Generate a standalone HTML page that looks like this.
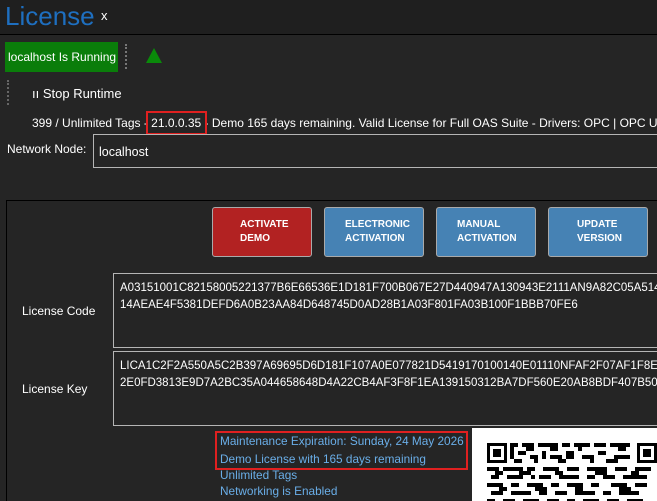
<!DOCTYPE html>
<html style="overflow:hidden"><head><style>
body{margin:0;width:657px;height:501px;background:#252525;overflow:hidden;font-family:"Liberation Sans",sans-serif;color:#fff;position:relative}
div{position:absolute;box-sizing:border-box}
.t{white-space:nowrap;font-size:12px}
.btn{top:207px;width:100px;height:50px;border:1px solid #aaa;border-radius:3px;background:#4682b4;font-weight:bold;font-size:10px;line-height:14px;padding:10px 0 0 0;text-align:left}
.box{border:1px solid #b5b5b5;border-right:none;left:113px;width:544px;height:75px;padding:6px 0 0 6px;font-size:11.5px;line-height:17px;white-space:nowrap;overflow:hidden}
.blue{color:#6aaee8;font-size:11.8px;white-space:nowrap;left:220px}
</style></head><body>
<div style="left:0;top:0;width:657px;height:35px;background:#1f1f1f;border-bottom:1px solid #000"></div>
<div class="t" style="left:5px;top:1px;font-size:26px;color:#1e6fc0">License</div>
<div class="t" style="left:101px;top:8px;font-size:13px">x</div>
<div class="t" style="left:5px;top:42px;width:113px;height:30px;background:#0a7d0a;padding:8px 0 0 3px">localhost Is Running</div>
<div style="left:125px;top:44px;width:4px;height:25px;border-left:2px dotted #777"></div>
<div style="left:146px;top:48px;width:0;height:0;border-left:8px solid transparent;border-right:8px solid transparent;border-bottom:15px solid #0a8a0a"></div>
<div style="left:7px;top:80px;width:3px;height:25px;border-left:2px dotted #666"></div>
<div class="t" style="left:32px;top:86px;font-size:13px">ıı&nbsp;Stop Runtime</div>
<div class="t" style="left:32px;top:116px;width:625px;overflow:hidden">399 / Unlimited Tags - 21.0.0.35 - Demo 165 days remaining. Valid License for Full OAS Suite - Drivers: OPC | OPC UA | OPC</div>
<div style="left:146px;top:111px;width:61px;height:24px;border:2px solid #e02020"></div>
<div class="t" style="left:7px;top:142px">Network Node:</div>
<div class="t" style="left:93px;top:134px;width:564px;height:34px;border:1px solid #b5b5b5;border-right:none;padding:10px 0 0 5px;font-size:12.5px">localhost</div>
<div style="left:6px;top:200px;width:651px;height:301px;border:1px solid #000;border-right:none;border-bottom:none"></div>
<div class="btn" style="left:212px;background:#b22222;padding-left:27px">ACTIVATE<br>DEMO</div>
<div class="btn" style="left:324px;padding-left:20px">ELECTRONIC<br>ACTIVATION</div>
<div class="btn" style="left:436px;padding-left:20px">MANUAL<br>ACTIVATION</div>
<div class="btn" style="left:548px;padding-left:28px">UPDATE<br>VERSION</div>
<div class="t" style="left:22px;top:304px">License Code</div>
<div class="box" style="top:273px">A03151001C82158005221377B6E66536E1D181F700B067E27D440947A130943E2111AN9A82C05A514<br>14AEAE4F5381DEFD6A0B23AA84D648745D0AD28B1A03F801FA03B100F1BBB70FE6</div>
<div class="t" style="left:22px;top:382px">License Key</div>
<div class="box" style="top:351px">LICA1C2F2A550A5C2B397A69695D6D181F107A0E077821D5419170100140E01110NFAF2F07AF1F8E91<br>2E0FD3813E9D7A2BC35A044658648D4A22CB4AF3F8F1EA139150312BA7DF560E20AB8BDF407B500FF</div>
<div class="blue" style="top:434px">Maintenance Expiration: Sunday, 24 May 2026</div>
<div class="blue" style="top:452px">Demo License with 165 days remaining</div>
<div class="blue" style="top:468px">Unlimited Tags</div>
<div class="blue" style="top:484px">Networking is Enabled</div>
<div style="left:215px;top:431px;width:253px;height:39px;border:2px solid #e02020"></div>
<div style="left:472px;top:428px;width:185px;height:73px;background:#fff;overflow:hidden">
<svg width="190" height="80" style="position:absolute;left:0;top:0">
<g fill="#000">
<rect x="15" y="15" width="20" height="20"/><rect x="18" y="18" width="14" height="14" fill="#fff"/><rect x="21" y="21" width="8" height="8"/>
<rect x="165" y="15" width="20" height="20"/><rect x="168" y="18" width="14" height="14" fill="#fff"/><rect x="171" y="21" width="8" height="8"/>
<rect x="38" y="15" width="8" height="4"/><rect x="50" y="15" width="12" height="4"/><rect x="66" y="15" width="20" height="4"/><rect x="90" y="15" width="8" height="4"/><rect x="102" y="15" width="16" height="4"/><rect x="122" y="15" width="12" height="4"/><rect x="138" y="15" width="20" height="4"/>
<rect x="38" y="19" width="4" height="4"/><rect x="54" y="19" width="8" height="4"/><rect x="78" y="19" width="8" height="4"/><rect x="106" y="19" width="4" height="4"/><rect x="146" y="19" width="8" height="4"/>
<rect x="38" y="23" width="4" height="8"/><rect x="46" y="23" width="8" height="4"/><rect x="58" y="27" width="8" height="4"/><rect x="70" y="23" width="4" height="8"/><rect x="78" y="27" width="12" height="4"/><rect x="94" y="23" width="8" height="8"/><rect x="110" y="27" width="12" height="4"/><rect x="126" y="23" width="8" height="4"/><rect x="142" y="27" width="16" height="4"/>
<rect x="42" y="31" width="8" height="4"/><rect x="62" y="31" width="4" height="4"/><rect x="86" y="31" width="8" height="4"/><rect x="118" y="31" width="4" height="4"/><rect x="134" y="31" width="12" height="4"/>
<rect x="15" y="39" width="12" height="4"/><rect x="31" y="39" width="20" height="4"/><rect x="55" y="39" width="8" height="4"/><rect x="71" y="39" width="16" height="4"/><rect x="95" y="39" width="12" height="4"/><rect x="115" y="39" width="20" height="4"/><rect x="143" y="39" width="12" height="4"/><rect x="163" y="39" width="16" height="4"/>
<rect x="23" y="43" width="8" height="4"/><rect x="47" y="43" width="12" height="4"/><rect x="83" y="43" width="8" height="4"/><rect x="123" y="43" width="12" height="4"/><rect x="159" y="43" width="8" height="4"/>
<rect x="19" y="47" width="8" height="4"/><rect x="35" y="47" width="16" height="4"/><rect x="59" y="47" width="4" height="4"/><rect x="67" y="47" width="12" height="4"/><rect x="87" y="47" width="20" height="4"/><rect x="115" y="47" width="8" height="4"/><rect x="131" y="47" width="12" height="4"/><rect x="151" y="47" width="24" height="4"/>
<rect x="15" y="55" width="16" height="4"/><rect x="39" y="55" width="8" height="4"/><rect x="55" y="55" width="16" height="4"/><rect x="79" y="55" width="8" height="4"/><rect x="95" y="55" width="16" height="4"/><rect x="119" y="55" width="8" height="4"/><rect x="139" y="55" width="16" height="4"/><rect x="163" y="55" width="12" height="4"/>
<rect x="27" y="59" width="8" height="4"/><rect x="63" y="59" width="12" height="4"/><rect x="103" y="59" width="8" height="4"/><rect x="147" y="59" width="12" height="4"/>
<rect x="19" y="63" width="12" height="4"/><rect x="39" y="63" width="20" height="4"/><rect x="67" y="63" width="8" height="4"/><rect x="83" y="63" width="12" height="4"/><rect x="103" y="63" width="20" height="4"/><rect x="131" y="63" width="8" height="4"/><rect x="147" y="63" width="20" height="4"/>
<rect x="15" y="71" width="8" height="4"/><rect x="31" y="71" width="12" height="4"/><rect x="51" y="71" width="16" height="4"/><rect x="75" y="71" width="12" height="4"/><rect x="95" y="71" width="8" height="4"/><rect x="111" y="71" width="16" height="4"/><rect x="135" y="71" width="12" height="4"/><rect x="155" y="71" width="16" height="4"/>
</g></svg></div>
</body></html>
